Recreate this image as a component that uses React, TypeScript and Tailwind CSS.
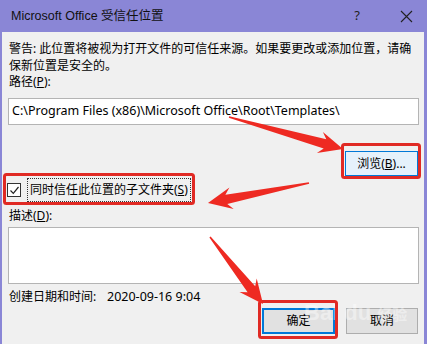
import React from "react";

type Pt = [number, number];

function arrowPoints(t: Pt, p: Pt, headLen = 24, headHalf = 11, tailHalf = 0.8, shaftHalf = 4.8): string {
  const dx = p[0] - t[0];
  const dy = p[1] - t[1];
  const len = Math.hypot(dx, dy);
  const ux = dx / len;
  const uy = dy / len;
  const nx = -uy;
  const ny = ux;
  const base: Pt = [p[0] - ux * headLen, p[1] - uy * headLen];
  const notch: Pt = [p[0] - ux * headLen * 0.78, p[1] - uy * headLen * 0.78];
  const pts: Pt[] = [
    [t[0] + nx * tailHalf, t[1] + ny * tailHalf],
    [notch[0] + nx * shaftHalf, notch[1] + ny * shaftHalf],
    [base[0] + nx * headHalf, base[1] + ny * headHalf],
    p,
    [base[0] - nx * headHalf, base[1] - ny * headHalf],
    [notch[0] - nx * shaftHalf, notch[1] - ny * shaftHalf],
    [t[0] - nx * tailHalf, t[1] - ny * tailHalf],
  ];
  return pts.map((q) => `${q[0].toFixed(1)},${q[1].toFixed(1)}`).join(" ");
}

const FONT = { fontFamily: '"Noto Sans", "Noto Sans CJK SC", sans-serif' };
const TITLE_FONT = { fontFamily: '"Liberation Sans", "Noto Sans CJK SC", sans-serif' };

export default function App() {
  return (
    <div
      className="w-[427px] h-[344px] relative overflow-hidden bg-[#8a86d6] flex flex-col text-black"
      style={FONT}
    >
      {/* Title bar */}
      <div className="h-[32px] flex items-center shrink-0">
        <span className="flex-1 pl-[11px] text-[12.5px] text-[#111]" style={TITLE_FONT}>
          Microsoft Office 受信任位置
        </span>
        <span className="w-[48px] text-center text-[13px] text-[#222]">?</span>
        <span className="w-[46px] pl-[4px] flex items-center justify-center">
          <svg width="13" height="13" viewBox="0 0 13 13">
            <path d="M1 1 L12 12 M12 1 L1 12" stroke="#222" strokeWidth="1.1" fill="none" />
          </svg>
        </span>
      </div>

      {/* Body */}
      <div className="flex-1 ml-[2px] mr-[3px] bg-[#f0f0f0] pl-[6px] pr-[5px] pt-[8px] text-[12px] flex flex-col">
        <div className="leading-[17px] pl-[1px]">
          <div className="whitespace-nowrap">警告: 此位置将被视为打开文件的可信任来源。如果要更改或添加位置，请确</div>
          <div className="whitespace-nowrap">保新位置是安全的。</div>
        </div>
        <div className="leading-[17px] pl-[1px] mt-[-1px]">
          路径(<span className="underline">P</span>):
        </div>
        <div className="mt-[8px] h-[27px] bg-white border border-[#b4b4b4] flex items-center pl-[3px] text-[12.5px] whitespace-nowrap">
          C:\Program Files (x86)\Microsoft Office\Root\Templates\
        </div>

        <div className="mt-[26px] flex justify-end pr-[1px]">
          <div className="w-[73px] h-[25px] bg-[#e5f1fb] border border-[#0078d7] flex items-center justify-center">
            浏览(<span className="underline">B</span>)...
          </div>
        </div>

        <div className="mt-[2px] h-[24px] flex items-center ml-[-1px]">
          <div className="w-[14px] h-[14px] bg-white border border-[#333] flex items-center justify-center">
            <svg width="11" height="11" viewBox="0 0 11 11">
              <path d="M1.5 5.5 L4.3 8.3 L9.5 2" stroke="#222" strokeWidth="1.2" fill="none" />
            </svg>
          </div>
          <div className="ml-[6px] h-[24px] border border-dotted border-[#333] flex items-center pl-[2px] pr-[2px] whitespace-nowrap">
            同时信任此位置的子文件夹(<span className="underline">S</span>)
          </div>
        </div>

        <div className="mt-[5px] leading-[17px] pl-[1px]">
          描述(<span className="underline">D</span>):
        </div>
        <div className="mt-[3px] h-[57px] bg-white border border-[#b4b4b4]" />

        <div className="mt-[4px] leading-[17px] pl-[1px] flex whitespace-nowrap">
          <span className="w-[98px]">创建日期和时间:</span>
          <span className="text-[12.5px]">2020-09-16 9:04</span>
        </div>

        <div className="mt-[3px] flex justify-end gap-[11px] pr-[1px]">
          <div className="w-[73px] h-[26px] bg-[#e1e1e1] border-2 border-[#0078d7] flex items-center justify-center">
            确定
          </div>
          <div className="w-[72px] h-[26px] bg-[#e1e1e1] border border-[#adadad] flex items-center justify-center">
            取消
          </div>
        </div>
      </div>

      {/* Watermark */}
      <div
        className="absolute left-[304px] top-[296px] text-[22px] font-bold text-white opacity-40 pointer-events-none whitespace-nowrap"
        style={{ fontFamily: '"Liberation Sans", sans-serif' }}
      >
        Bai du <span className="text-[15px]" style={FONT}>经验</span>
      </div>

      {/* Annotations */}
      <svg className="absolute left-0 top-0 pointer-events-none" width="427" height="344" viewBox="0 0 427 344">
        <rect x="342.5" y="144.5" width="77" height="33" rx="2" fill="none" stroke="#e02a24" strokeWidth="3" />
        <rect x="4.5" y="174.5" width="189" height="29" rx="2" fill="none" stroke="#e02a24" strokeWidth="3" />
        <rect x="259.5" y="301.5" width="77" height="36" rx="2" fill="none" stroke="#e02a24" strokeWidth="3" />
        <polygon points={arrowPoints([229, 117], [343, 149])} fill="#ee2a22" />
        <polygon points={arrowPoints([309, 183], [208, 203])} fill="#ee2a22" />
        <polygon points={arrowPoints([210, 237], [263, 304])} fill="#ee2a22" />
      </svg>
    </div>
  );
}
